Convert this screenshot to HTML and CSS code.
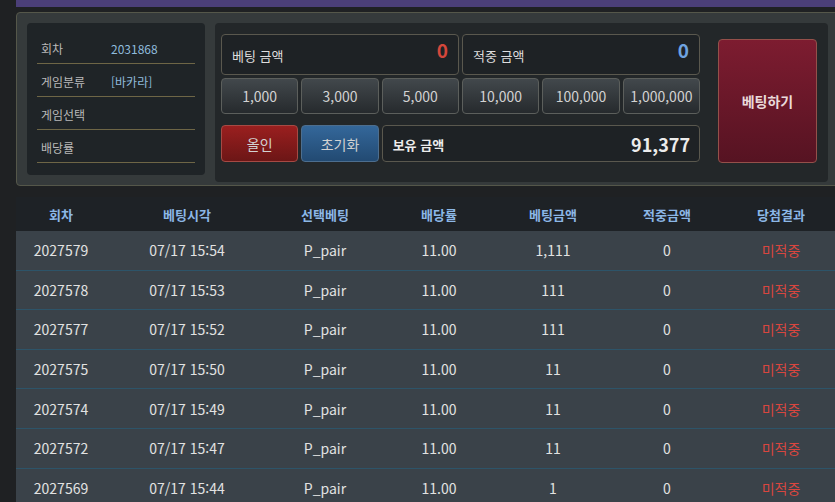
FILE: index.html
```html
<!DOCTYPE html>
<html lang="ko">
<head>
    <meta charset="UTF-8">
    <meta name="viewport" content="width=device-width, initial-scale=1.0">
    <title>베팅</title>
    <link rel="stylesheet" href="styles.css">
</head>
<body>

    <div class="page">
        <div class="topbar"></div>

        <div class="bet-panel">
            <div class="info-box">
                <div class="info-row"><span class="info-label">회차</span><span class="info-value">2031868</span></div>
                <div class="info-row"><span class="info-label">게임분류</span><span class="info-value">[바카라]</span></div>
                <div class="info-row"><span class="info-label">게임선택</span><span class="info-value"></span></div>
                <div class="info-row"><span class="info-label">배당률</span><span class="info-value"></span></div>
            </div>

            <div class="bet-area">
                <div class="bet-controls">
                    <div class="amount-row">
                        <div class="amount-box">
                            <span class="amount-label">베팅 금액</span>
                            <span class="amount-num red">0</span>
                        </div>
                        <div class="amount-box">
                            <span class="amount-label">적중 금액</span>
                            <span class="amount-num blue">0</span>
                        </div>
                    </div>

                    <div class="chip-row">
                        <button class="chip">1,000</button>
                        <button class="chip">3,000</button>
                        <button class="chip">5,000</button>
                        <button class="chip">10,000</button>
                        <button class="chip">100,000</button>
                        <button class="chip">1,000,000</button>
                    </div>

                    <div class="action-row">
                        <button class="chip allin">올인</button>
                        <button class="chip reset">초기화</button>
                        <div class="balance-box">
                            <span class="balance-label">보유 금액</span>
                            <span class="balance-num">91,377</span>
                        </div>
                    </div>
                </div>

                <button class="bet-submit">베팅하기</button>
            </div>
        </div>

        <table class="history">
            <colgroup>
                <col style="width: 90px">
                <col style="width: 162px">
                <col style="width: 114px">
                <col style="width: 114px">
                <col style="width: 114px">
                <col style="width: 114px">
                <col style="width: 114px">
            </colgroup>
            <thead>
                <tr>
                    <th>회차</th>
                    <th>베팅시각</th>
                    <th>선택베팅</th>
                    <th>배당률</th>
                    <th>베팅금액</th>
                    <th>적중금액</th>
                    <th>당첨결과</th>
                </tr>
            </thead>
            <tbody>
                <tr><td>2027579</td><td>07/17 15:54</td><td>P_pair</td><td>11.00</td><td>1,111</td><td>0</td><td class="lose">미적중</td></tr>
                <tr><td>2027578</td><td>07/17 15:53</td><td>P_pair</td><td>11.00</td><td>111</td><td>0</td><td class="lose">미적중</td></tr>
                <tr><td>2027577</td><td>07/17 15:52</td><td>P_pair</td><td>11.00</td><td>111</td><td>0</td><td class="lose">미적중</td></tr>
                <tr><td>2027575</td><td>07/17 15:50</td><td>P_pair</td><td>11.00</td><td>11</td><td>0</td><td class="lose">미적중</td></tr>
                <tr><td>2027574</td><td>07/17 15:49</td><td>P_pair</td><td>11.00</td><td>11</td><td>0</td><td class="lose">미적중</td></tr>
                <tr><td>2027572</td><td>07/17 15:47</td><td>P_pair</td><td>11.00</td><td>11</td><td>0</td><td class="lose">미적중</td></tr>
                <tr><td>2027569</td><td>07/17 15:44</td><td>P_pair</td><td>11.00</td><td>1</td><td>0</td><td class="lose">미적중</td></tr>
            </tbody>
        </table>
    </div>

</body>
</html>
```

FILE: styles.css
```css
html, body {
    margin: 0;
    height: 100%;
    overflow: hidden;
}
body {
    font-family: "Noto Sans CJK KR", "Noto Sans", sans-serif;
    background-color: #1f2123;
    color: #dcdcdc;
}
.page {
    margin-left: 16px;
    width: 830px;
}
.topbar {
    height: 7px;
    background-color: #4b3f78;
}
.bet-panel {
    margin-top: 5px;
    display: flex;
    align-items: flex-start;
    gap: 10px;
    padding: 10px 8px 3px 10px;
    background-color: #353a3b;
    border: 1px solid #55574a;
    border-radius: 4px;
}
.info-box {
    width: 178px;
    height: 152px;
    box-sizing: border-box;
    padding: 8px 10px 0;
    background-color: #1f2427;
    border-radius: 4px;
}
.info-row {
    display: flex;
    align-items: center;
    height: 33px;
    box-sizing: border-box;
    padding: 3px 0 0 4px;
    border-bottom: 1px solid #6e6646;
    font-size: 12px;
}
.info-label {
    width: 70px;
    color: #b9b9b9;
}
.info-value {
    color: #8fbbdc;
}
.bet-area {
    width: 613px;
    height: 159px;
    box-sizing: border-box;
    display: flex;
    align-items: flex-start;
    gap: 18px;
    padding: 11px 0 0 6px;
    background-color: #232729;
    border-radius: 4px;
}
.bet-controls {
    width: 479px;
}
.amount-row {
    display: flex;
    gap: 3px;
}
.amount-box {
    flex: 1;
    height: 41px;
    box-sizing: border-box;
    display: flex;
    justify-content: space-between;
    padding: 0 10px;
    background-color: #1e2225;
    border: 1px solid #5a584e;
    border-radius: 4px;
}
.amount-label {
    font-size: 13px;
    line-height: 39px;
    padding-top: 1px;
    color: #dedede;
}
.amount-num {
    font-size: 19px;
    font-weight: bold;
    line-height: 30px;
}
.red {
    color: #d4473b;
}
.blue {
    color: #6fa3e0;
}
.chip-row, .action-row {
    display: grid;
    grid-template-columns: repeat(6, 1fr);
    column-gap: 3px;
}
.chip-row {
    margin-top: 3px;
}
.action-row {
    margin-top: 11px;
}
.chip {
    height: 36px;
    padding: 0;
    font-family: inherit;
    font-size: 14px;
    color: #d2d2d2;
    background: linear-gradient(#42484c, #262a2d);
    border: 1px solid #5c5f5c;
    border-radius: 4px;
    cursor: pointer;
}
.chip:hover {
    background: linear-gradient(#4d5459, #2e3236);
}
.allin {
    height: 37px;
    background: linear-gradient(#9a1f1f, #6c1616);
    border-color: #a54a44;
}
.reset {
    height: 37px;
    background: linear-gradient(#34679a, #224a72);
    border-color: #4d6e8e;
}
.balance-box {
    grid-column: span 4;
    height: 37px;
    box-sizing: border-box;
    display: flex;
    align-items: center;
    justify-content: space-between;
    padding: 0 9px 0 10px;
    background-color: #1e2225;
    border: 1px solid #5a584e;
    border-radius: 4px;
}
.balance-label {
    font-size: 13px;
    font-weight: bold;
    color: #ececec;
    padding-top: 2px;
}
.balance-num {
    font-size: 18px;
    font-weight: bold;
    color: #ececec;
}
.bet-submit {
    margin-top: 5px;
    width: 99px;
    height: 124px;
    font-family: inherit;
    font-size: 14px;
    font-weight: bold;
    color: #eadada;
    background: linear-gradient(#7d1c30, #561322);
    border: 1px solid #94504a;
    border-radius: 4px;
    cursor: pointer;
}
.history {
    margin-top: 11px;
    width: 822px;
    table-layout: fixed;
    border-collapse: collapse;
}
.history th {
    height: 34px;
    padding: 0;
    font-size: 13px;
    font-weight: bold;
    color: #8cb7e6;
    background-color: #1e2226;
}
.history td {
    height: 38.6px;
    padding: 0;
    text-align: center;
    font-size: 14px;
    color: #e2e2e2;
    background-color: #3a4249;
    border-bottom: 1px solid #2d5469;
}
.history td.lose {
    color: #d9463f;
}
```
